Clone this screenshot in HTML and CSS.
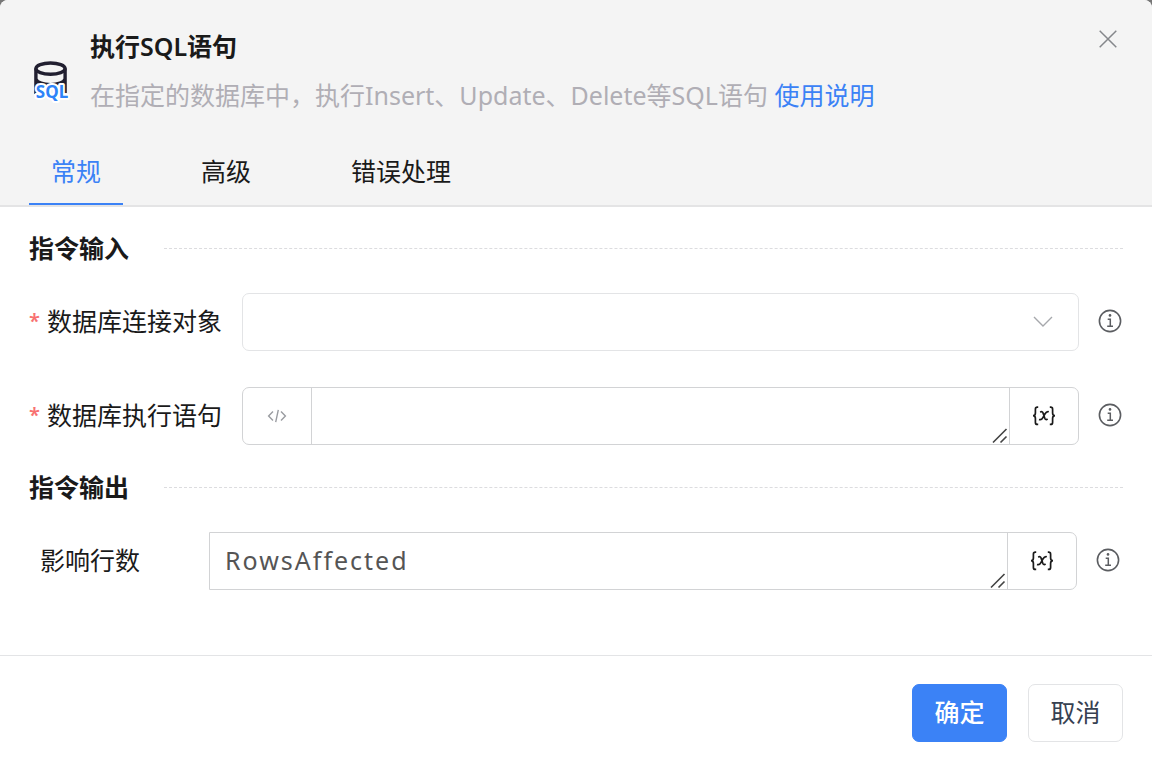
FILE: index.html
```html
<!DOCTYPE html>
<html lang="zh-CN">
<head>
<meta charset="utf-8">
<meta name="viewport" content="width=device-width, initial-scale=1">
<title>执行SQL语句</title>
<link rel="stylesheet" href="styles.css">
</head>
<body>
<svg class="sprite" aria-hidden="true">
  <symbol id="icon-info" viewBox="0 0 24 24">
    <circle cx="12" cy="12" r="10.6" fill="none" stroke="currentColor" stroke-width="1.6"/>
    <circle cx="12" cy="6.4" r="1.3" fill="currentColor"/>
    <path d="M9.7 10.2H12.3V17M9.2 17.3H15" fill="none" stroke="currentColor" stroke-width="1.5"/>
  </symbol>
  <symbol id="icon-grip" viewBox="0 0 16 16">
    <path d="M1 14.5 14.5 1M8.5 14.5 14.5 8.5" fill="none" stroke="currentColor" stroke-width="1.6"/>
  </symbol>
  <symbol id="icon-variable" viewBox="0 0 24 20">
    <path d="M6.2 1.2H5.4Q3.4 1.2 3.4 3.2V7Q3.4 9.7 1 9.7Q3.4 9.7 3.4 12.4V16.4Q3.4 18.4 5.4 18.4H6.2M17.8 1.2H18.6Q20.6 1.2 20.6 3.2V7Q20.6 9.7 23 9.7Q20.6 9.7 20.6 12.4V16.4Q20.6 18.4 18.6 18.4H17.8" fill="none" stroke="currentColor" stroke-width="1.7"/>
    <path d="M8.2 6.2Q10.3 4.8 11.2 7.4L12.8 12.2Q13.6 14.4 15.6 13M16.8 5.8Q14.6 5.2 12.9 8L10.9 11.6Q9.4 14.4 7 13.5" fill="none" stroke="currentColor" stroke-width="1.7"/>
  </symbol>
</svg>

<main class="dialog">
  <header class="dialog-header">
    <div class="intro">
      <svg class="db-icon" viewBox="0 0 36 40" aria-hidden="true">
        <g fill="none" stroke="#211f30" stroke-width="3.4">
          <ellipse cx="17.5" cy="7.6" rx="14.6" ry="5.6"/>
          <path d="M2.9 7.6V33M32.1 7.6V32M2.9 18C5 25.5 30 25.5 32.1 18"/>
        </g>
        <text class="db-icon-text" x="19" y="37" text-anchor="middle">SQL</text>
      </svg>
      <div class="intro-text">
        <h1 class="title">执行SQL语句</h1>
        <p class="subtitle">在指定的数据库中，执行Insert、Update、Delete等SQL语句 <a class="help-link" href="#help">使用说明</a></p>
      </div>
      <button class="close" type="button" aria-label="关闭">
        <svg viewBox="0 0 18 18" aria-hidden="true"><path d="M.7.7 17.3 17.3M17.3.7.7 17.3" fill="none" stroke="currentColor" stroke-width="1.5"/></svg>
      </button>
    </div>
    <nav class="tabs" role="tablist">
      <button class="tab tab-active" type="button" role="tab" aria-selected="true">常规</button>
      <button class="tab" type="button" role="tab" aria-selected="false">高级</button>
      <button class="tab" type="button" role="tab" aria-selected="false">错误处理</button>
    </nav>
  </header>

  <form class="dialog-body">
    <h2 class="section">指令输入</h2>
    <div class="row">
      <label class="label required" for="connection">数据库连接对象</label>
      <div class="field field-select">
        <select class="select" id="connection" required><option value=""></option></select>
        <svg class="chevron" viewBox="0 0 20 12" aria-hidden="true"><path d="M1 1 10 10 19 1" fill="none" stroke="currentColor" stroke-width="1.4"/></svg>
      </div>
      <button class="info" type="button" aria-label="数据库连接对象说明"><svg><use href="#icon-info"/></svg></button>
    </div>
    <div class="row">
      <label class="label required" for="statement">数据库执行语句</label>
      <div class="field">
        <button class="addon addon-code" type="button" aria-label="编辑代码">
          <svg viewBox="0 0 20 14" aria-hidden="true"><path d="M6 2.5 1.6 7 6 11.5M14 2.5 18.4 7 14 11.5M11.3.8 8.7 13.2" fill="none" stroke="currentColor" stroke-width="1.4"/></svg>
        </button>
        <div class="area">
          <textarea class="textarea" id="statement" rows="1" required></textarea>
          <svg class="grip" aria-hidden="true"><use href="#icon-grip"/></svg>
        </div>
        <button class="addon addon-variable" type="button" aria-label="选择变量"><svg><use href="#icon-variable"/></svg></button>
      </div>
      <button class="info" type="button" aria-label="数据库执行语句说明"><svg><use href="#icon-info"/></svg></button>
    </div>

    <h2 class="section">指令输出</h2>
    <div class="row row-output">
      <label class="label" for="rows">影响行数</label>
      <div class="field field-output">
        <div class="area">
          <textarea class="textarea" id="rows" rows="1">RowsAffected</textarea>
          <svg class="grip" aria-hidden="true"><use href="#icon-grip"/></svg>
        </div>
        <button class="addon addon-variable" type="button" aria-label="选择变量"><svg><use href="#icon-variable"/></svg></button>
      </div>
      <button class="info" type="button" aria-label="影响行数说明"><svg><use href="#icon-info"/></svg></button>
    </div>
  </form>

  <footer class="dialog-footer">
    <button class="button button-primary" type="button">确定</button>
    <button class="button" type="button">取消</button>
  </footer>
</main>
</body>
</html>
```

FILE: styles.css
```css
* {
  box-sizing: border-box;
}

body {
  margin: 0;
  background: #777;
  color: #1a1a1a;
  font: 25px/36px "Noto Sans", "Noto Sans CJK SC", sans-serif;
}

button,
select,
textarea {
  margin: 0;
  padding: 0;
  border: 0;
  background: none;
  color: inherit;
  font: inherit;
}

button {
  cursor: pointer;
}

svg {
  display: block;
}

.sprite {
  display: none;
}

.dialog {
  display: flex;
  flex-direction: column;
  min-height: 100vh;
  overflow: hidden;
  border-radius: 8px 8px 0 0;
  background: #fff;
}

.dialog-header {
  padding: 28px 29px 0;
  border-bottom: 2px solid #e4e4e5;
  background: #f4f4f4;
}

.intro {
  display: flex;
  align-items: flex-start;
}

.db-icon {
  flex: none;
  width: 36px;
  height: 40px;
  margin: 33px 21px 0 4px;
  overflow: visible;
}

.db-icon-text {
  fill: #2e83f8;
  stroke: #fff;
  stroke-width: 4px;
  stroke-linejoin: round;
  paint-order: stroke;
  font: bold 17px/20px "Noto Sans", sans-serif;
}

.intro-text {
  flex: 1;
}

.title {
  margin: 0;
  font-size: 25px;
  font-weight: 600;
}

.subtitle {
  margin: 13px 0 0;
  color: #b0aeb5;
}

.help-link {
  color: #3b82f6;
  text-decoration: none;
}

.close {
  padding: 2px 6px;
  color: #85878b;
}

.close svg {
  width: 18px;
  height: 18px;
}

.tabs {
  display: flex;
  gap: 56px;
  margin-top: 24px;
}

.tab {
  padding: 16px 22px 14px;
  border-bottom: 2px solid transparent;
}

.tab-active {
  border-color: #3b82f6;
  color: #3b82f6;
}

.dialog-body {
  flex: 1;
  padding: 23px 29px 65px;
}

.section {
  display: flex;
  align-items: center;
  gap: 35px;
  margin: 0 0 27px;
  font-size: 25px;
  font-weight: 700;
}

.section::after {
  content: "";
  flex: 1;
  border-top: 1px dashed #dcdcdf;
}

.row + .row {
  margin-top: 36px;
}

.row + .section {
  margin-top: 24px;
}

.row {
  display: flex;
  align-items: center;
}

.row-output {
  padding: 0 2px 0 11px;
}

.label {
  flex: none;
  width: 213px;
  padding-bottom: 2px;
}

.row-output .label {
  width: 169px;
}

.required::before {
  content: "*";
  display: inline-block;
  width: 18px;
  color: #f87171;
  font-size: 20px;
  font-weight: 600;
  line-height: 30px;
  vertical-align: 3px;
}

.field {
  position: relative;
  display: flex;
  flex: 1;
  height: 58px;
  border: 1px solid #d2d3d5;
  border-radius: 7px;
}

.field-select {
  border-color: #e3e4e6;
}

.field-output {
  border-radius: 0 7px 7px 0;
}

.select {
  flex: 1;
  padding: 0 60px 0 16px;
  appearance: none;
}

.chevron {
  position: absolute;
  top: 22px;
  right: 25px;
  width: 20px;
  height: 12px;
  color: #a6a8ac;
  pointer-events: none;
}

.area {
  position: relative;
  display: flex;
  flex: 1;
}

.textarea {
  flex: 1;
  padding: 9px 15px;
  resize: none;
  overflow: hidden;
  color: #555;
  letter-spacing: 2px;
}

.grip {
  position: absolute;
  right: 1px;
  bottom: 0;
  width: 16px;
  height: 16px;
  color: #444;
}

.addon {
  display: flex;
  flex: none;
  align-items: center;
  justify-content: center;
  width: 69px;
}

.addon-code {
  border-right: 1px solid #d2d3d5;
  color: #9a9ca1;
}

.addon-code svg {
  width: 20px;
  height: 14px;
}

.addon-variable {
  border-left: 1px solid #d2d3d5;
}

.addon-variable svg {
  width: 24px;
  height: 20px;
}

.info {
  flex: none;
  margin: 0 1px 0 19px;
  padding-bottom: 3px;
  color: #5b5d61;
}

.info svg {
  width: 24px;
  height: 24px;
}

.dialog-footer {
  display: flex;
  justify-content: flex-end;
  gap: 21px;
  padding: 28px 29px;
  border-top: 1px solid #e3e4e6;
}

.button {
  min-width: 95px;
  height: 58px;
  padding: 0 20px 2px;
  border: 1px solid #e3e4e6;
  border-radius: 7px;
  color: #374151;
}

.button-primary {
  border-color: #3b82f6;
  background: #3b82f6;
  color: #fff;
  font-weight: 500;
}
```
